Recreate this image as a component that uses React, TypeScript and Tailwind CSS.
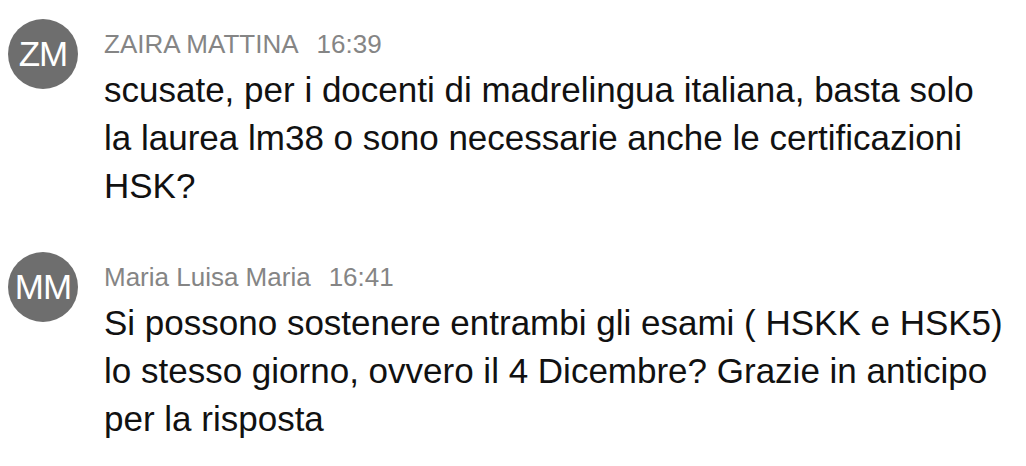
const messages = [
  {
    initials: "ZM",
    name: "ZAIRA MATTINA",
    time: "16:39",
    lines: [
      "scusate, per i docenti di madrelingua italiana, basta solo",
      "la laurea lm38 o sono necessarie anche le certificazioni",
      "HSK?",
    ],
  },
  {
    initials: "MM",
    name: "Maria Luisa Maria",
    time: "16:41",
    lines: [
      "Si possono sostenere entrambi gli esami ( HSKK e HSK5)",
      "lo stesso giorno, ovvero il 4 Dicembre? Grazie in anticipo",
      "per la risposta",
    ],
  },
];

export default function App() {
  return (
    <div
      className="flex h-[466px] w-[1026px] flex-col gap-[42px] bg-white pt-[19px] pl-[8px]"
      style={{ fontFamily: '"Liberation Sans", Arial, sans-serif' }}
    >
      {messages.map((msg) => (
        <div key={msg.time} className="flex items-start gap-[26px]">
          <div className="flex h-[70px] w-[70px] shrink-0 items-center justify-center rounded-full bg-[#6e6e6e] text-[35px] tracking-[-1px] text-white">
            {msg.initials}
          </div>
          <div className="flex flex-col pt-[9px]">
            <div className="flex text-[26px] leading-[32px] text-[#858585] whitespace-nowrap">
              <span>{msg.name}</span>
              <span className="ml-[18px]">{msg.time}</span>
            </div>
            <div className="mt-[6px] text-[35px] leading-[48px] text-[#111111]">
              {msg.lines.map((line, i) => (
                <div key={i} className="whitespace-nowrap">
                  {line}
                </div>
              ))}
            </div>
          </div>
        </div>
      ))}
    </div>
  );
}
